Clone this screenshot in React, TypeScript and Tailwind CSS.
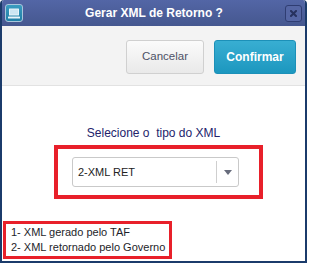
import React from 'react';

function AppIcon() {
  return (
    <div className="w-[18px] h-[18px] rounded-[3px] border border-[#a9c6dc] bg-gradient-to-b from-[#3a9cc0] to-[#1f7fa6] flex items-center justify-center">
      <svg width="12" height="11" viewBox="0 0 12 11">
        <rect x="1" y="0.5" width="10" height="7" rx="0.5" fill="#e8f4fa" />
        <rect x="2" y="1.5" width="8" height="5" fill="#cde6f2" />
        <rect x="0" y="8.5" width="12" height="2" rx="0.5" fill="#e8f4fa" />
      </svg>
    </div>
  );
}

function CloseButton() {
  return (
    <button className="w-[17px] h-[17px] rounded-[3px] border border-[#2f3d72] bg-[#5566a4] flex items-center justify-center">
      <svg width="7" height="7" viewBox="0 0 7 7">
        <path d="M1 1 L6 6 M6 1 L1 6" stroke="#27325e" strokeWidth="2" strokeLinecap="square" />
      </svg>
    </button>
  );
}

export default function App() {
  return (
    <div className="w-[312px] h-[266px] bg-white font-['Liberation_Sans',Arial,sans-serif]">
      <div className="w-[307px] h-[263px] flex flex-col rounded-t-[4px] overflow-hidden border-x-2 border-b-2 border-[#1b3b6b]">
        {/* title bar */}
        <div className="h-[26px] shrink-0 flex items-center justify-between px-[3px] bg-gradient-to-b from-[#5366a6] to-[#45578f]">
          <AppIcon />
          <span className="text-white text-[12px] font-bold">Gerar XML de Retorno ?</span>
          <CloseButton />
        </div>

        {/* actions */}
        <div className="h-[60px] shrink-0 flex justify-end items-start gap-[10px] pt-[14px] pr-[9px] bg-[#f3f3f3] border-b border-[#e2e2e2]">
          <button className="w-[78px] h-[34px] rounded-[3px] border border-[#d0d0d0] bg-gradient-to-b from-[#fbfbfb] to-[#e9e9e9] text-[11.5px] text-[#4d5166]">
            Cancelar
          </button>
          <button className="w-[82px] h-[34px] rounded-[3px] border border-[#1c90b8] bg-gradient-to-b from-[#38aed2] to-[#1b97bf] text-[12px] font-bold text-white">
            Confirmar
          </button>
        </div>

        {/* content */}
        <div className="flex-1 flex flex-col items-center bg-white">
          <p className="mt-[40px] text-[12px] leading-[14px] text-[#23236b] whitespace-pre">Selecione o  tipo do XML</p>

          <div className="self-start ml-[52px] mt-[5px] w-[209px] h-[54px] border-4 border-[#e8202a]">
            <div className="ml-[14px] mt-[8px] w-[167px] h-[30px] flex rounded-[3px] border border-[#c9c9c9] bg-white">
              <span className="flex-1 flex items-center pl-[5px] text-[11px] text-[#222]">2-XML RET</span>
              <span className="w-[22px] my-[3px] flex items-center justify-center border-l border-[#cfcfcf]">
                <svg width="8" height="5" viewBox="0 0 8 5">
                  <path d="M0 0 H8 L4 5 Z" fill="#676c7c" />
                </svg>
              </span>
            </div>
          </div>

          <div className="self-start ml-[1px] mt-[22px] w-[169px] h-[38px] border-[3px] border-[#e8202a] pl-[5px] pt-[1px] text-[11px] leading-[15px] text-[#1e1e2a]">
            <p>1- XML gerado pelo TAF</p>
            <p>2- XML retornado pelo Governo</p>
          </div>
        </div>
      </div>
    </div>
  );
}
